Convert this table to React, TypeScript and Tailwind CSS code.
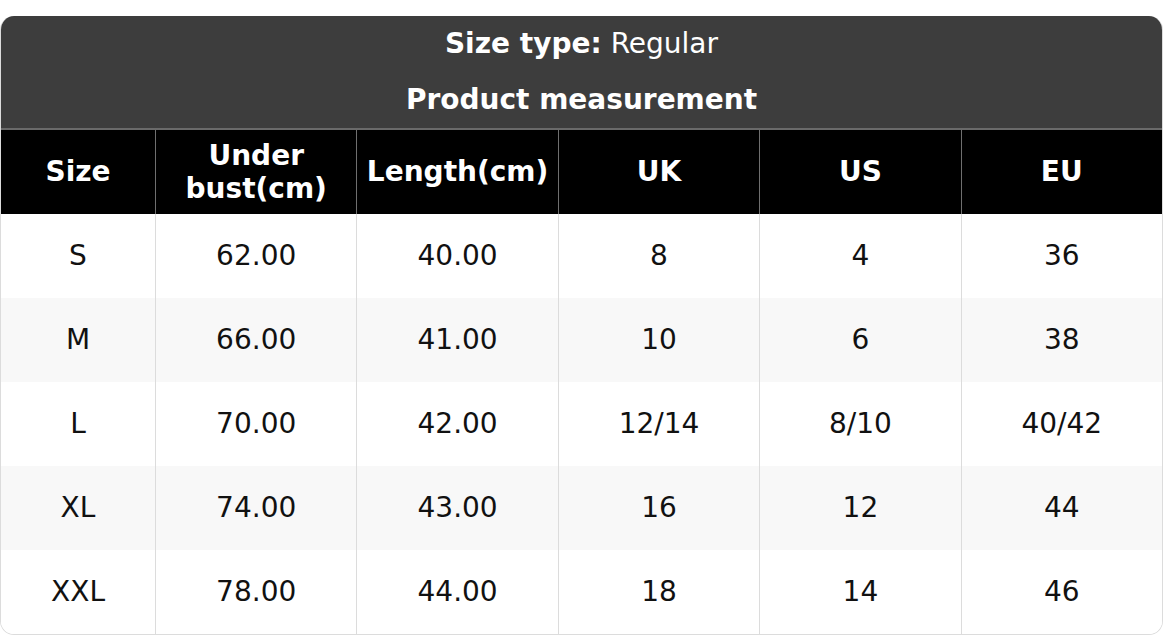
import React from "react";

const rows = [
  ["S", "62.00", "40.00", "8", "4", "36"],
  ["M", "66.00", "41.00", "10", "6", "38"],
  ["L", "70.00", "42.00", "12/14", "8/10", "40/42"],
  ["XL", "74.00", "43.00", "16", "12", "44"],
  ["XXL", "78.00", "44.00", "18", "14", "46"],
];

export default function App() {
  return (
    <div className="pt-4 bg-white font-['DejaVu_Sans',sans-serif] w-[1164px] h-[636px]">
      <div className="w-[1163px] rounded-[14px] overflow-hidden border border-[#dcdcdc] border-t-0">
        <div className="bg-[#3d3d3d] text-white text-[28px] text-center">
          <div className="h-[56px] flex items-center justify-center">
            <span className="font-bold">Size type:</span>
            <span className="ml-[9px]">Regular</span>
          </div>
          <div className="h-[56px] flex items-center justify-center font-bold">
            Product measurement
          </div>
        </div>
        <div className="grid grid-cols-[154px_repeat(5,1fr)] bg-black text-white font-bold text-[28px] border-t-2 border-[#6a6a6a] h-[86px]">
          <div className="flex items-center justify-center text-center">Size</div>
          <div className="flex items-center justify-center text-center leading-[33px] border-l border-[#6f6f6f]">
            Under
            <br />
            bust(cm)
          </div>
          <div className="flex items-center justify-center text-center border-l border-[#6f6f6f]">Length(cm)</div>
          <div className="flex items-center justify-center text-center border-l border-[#6f6f6f]">UK</div>
          <div className="flex items-center justify-center text-center border-l border-[#6f6f6f]">US</div>
          <div className="flex items-center justify-center text-center border-l border-[#6f6f6f]">EU</div>
        </div>
        {rows.map((r, i) => (
          <div
            key={r[0]}
            className={`grid grid-cols-[154px_repeat(5,1fr)] h-[84px] text-[28px] text-[#111] ${
              i % 2 === 1 ? "bg-[#f8f8f8]" : "bg-white"
            }`}
          >
            {r.map((c, j) => (
              <div
                key={j}
                className={`flex items-center justify-center ${j > 0 ? "border-l border-[#dcdcdc]" : ""}`}
              >
                {c}
              </div>
            ))}
          </div>
        ))}
      </div>
    </div>
  );
}
